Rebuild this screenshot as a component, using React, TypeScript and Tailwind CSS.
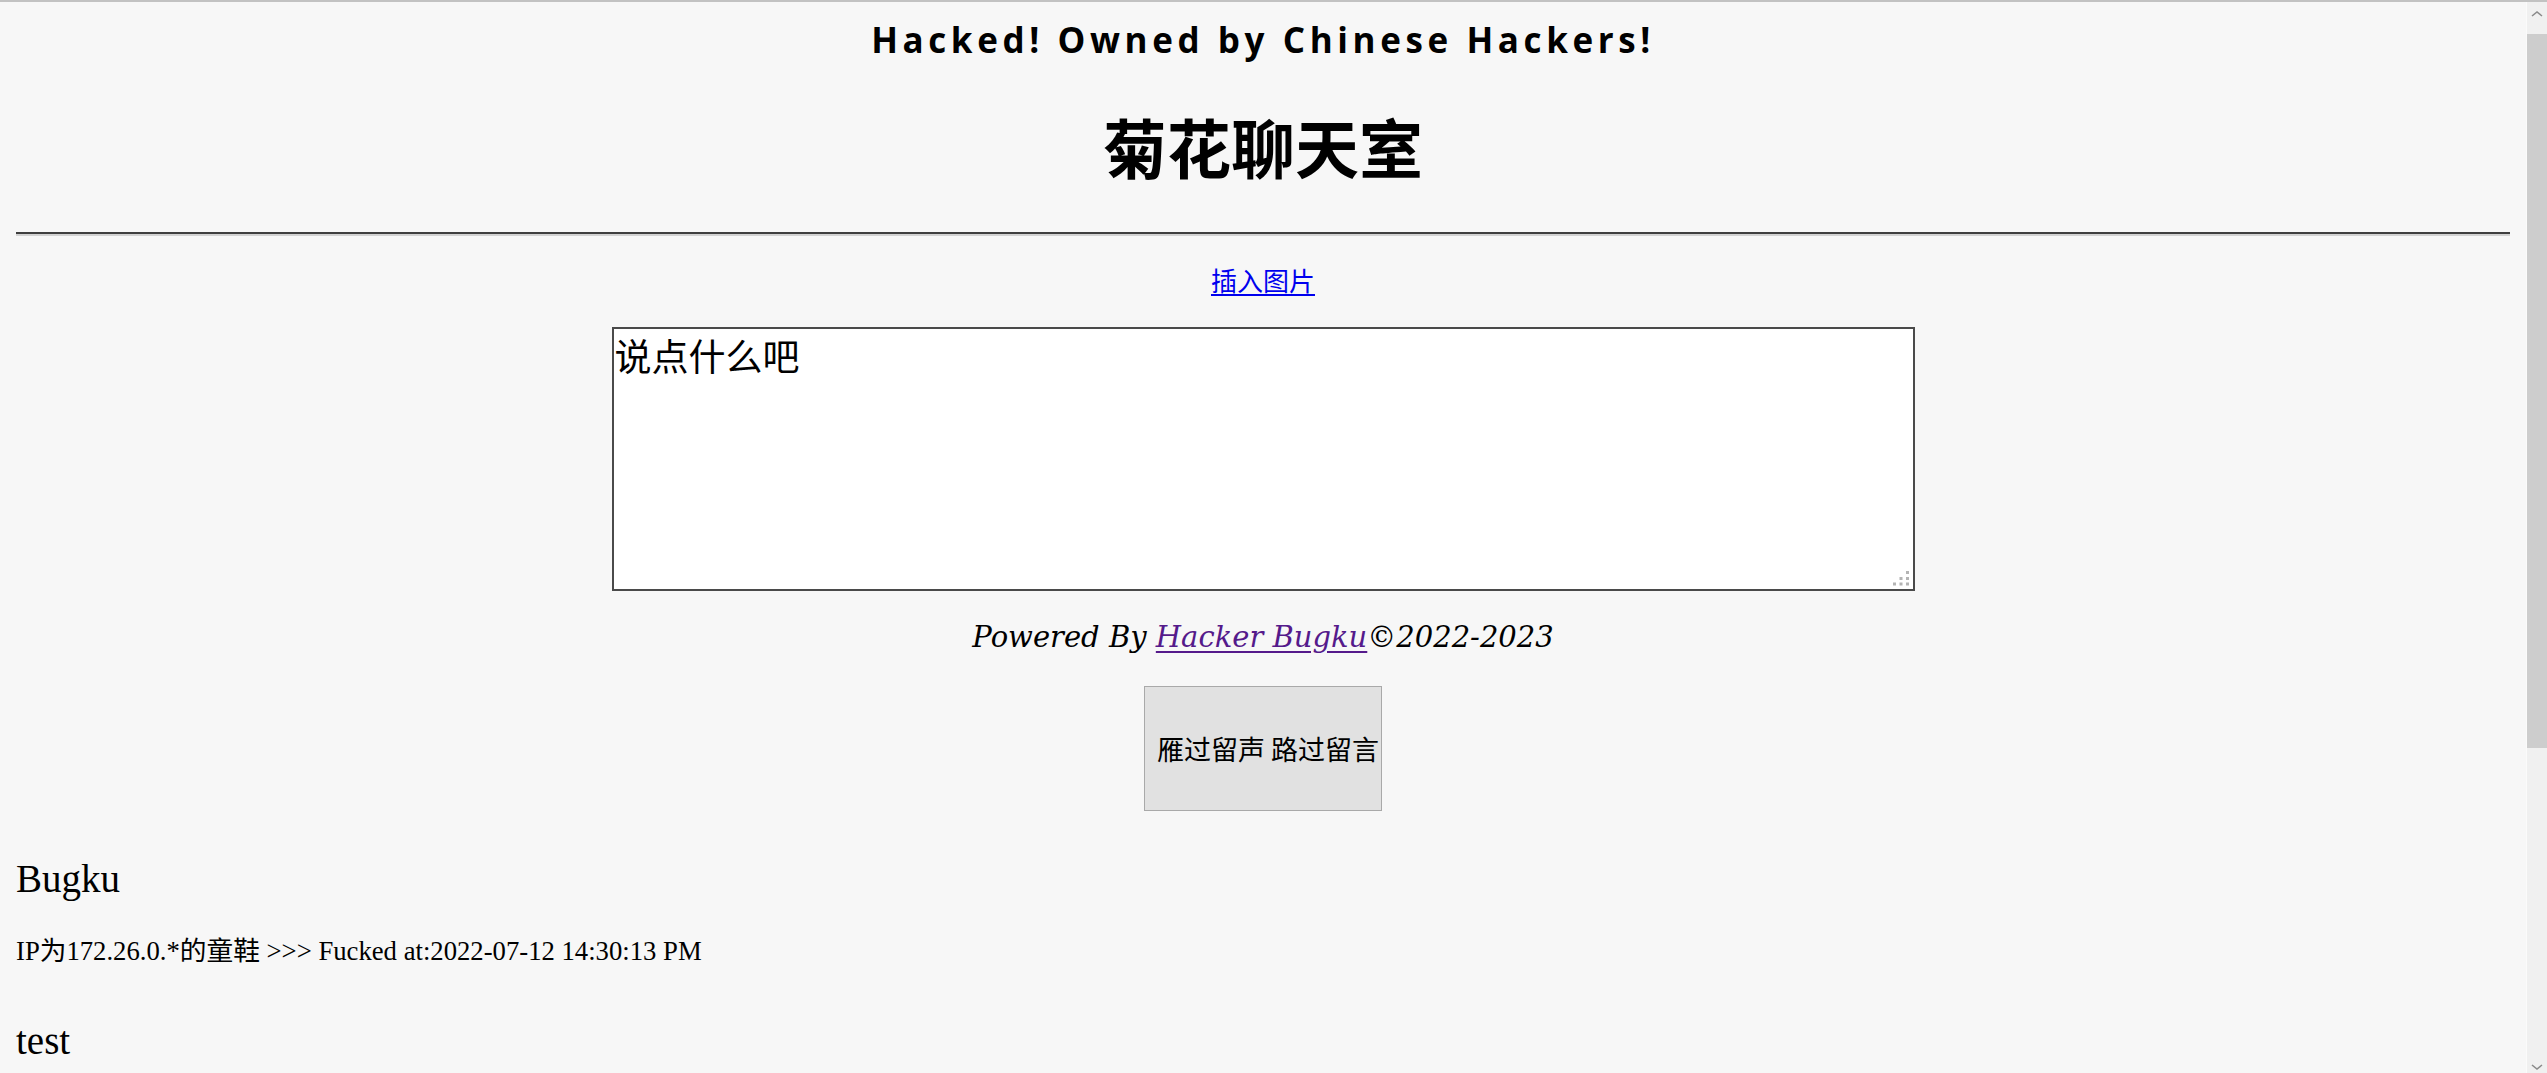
import React from "react";

function ResizeGrip() {
  // the little dotted corner drawn by the browser on the textarea
  return (
    <svg
      className="absolute right-[6px] bottom-[5px]"
      width="16"
      height="15"
      viewBox="0 0 16 15"
    >
      <rect x="13" y="0" width="3" height="3" fill="#b4b4b4" />
      <rect x="6.5" y="6" width="3" height="3" fill="#b4b4b4" />
      <rect x="13" y="6" width="3" height="3" fill="#b4b4b4" />
      <rect x="0" y="11.5" width="3" height="3" fill="#b4b4b4" />
      <rect x="6.5" y="11.5" width="3" height="3" fill="#b4b4b4" />
      <rect x="13" y="11.5" width="3" height="3" fill="#b4b4b4" />
    </svg>
  );
}

function Scrollbar() {
  return (
    <div className="w-[21px] flex flex-col bg-[#f0f0f0] border-l border-l-[#fbfbfb]">
      <div className="h-[32px] flex items-start justify-center pt-[8px]">
        <svg width="12" height="8" viewBox="0 0 12 8">
          <path d="M1 6 L6 2 L11 6" stroke="#8a8a8a" strokeWidth="1.6" fill="none" />
        </svg>
      </div>
      <div className="h-[714px] bg-[#cdcdcd]" />
      <div className="flex-1" />
      <div className="h-[22px] flex items-end justify-center pb-[2px]">
        <svg width="12" height="8" viewBox="0 0 12 8">
          <path d="M1 2 L6 6 L11 2" stroke="#8a8a8a" strokeWidth="1.6" fill="none" />
        </svg>
      </div>
    </div>
  );
}

export default function App() {
  const cjk = "font-['Noto_Sans_CJK_SC',sans-serif]";
  return (
    <div className="h-[1073px] w-full flex flex-col bg-[#f7f7f7] overflow-hidden">
      <div className="h-[2px] bg-[#c2c2c2]" />
      <div className="flex flex-1 min-h-0">
        <main className="flex-1 min-w-0 overflow-hidden px-[16px] text-black">
          <h3 className="mt-[20px] text-center text-[35px] leading-none font-bold tracking-[4.6px] font-['Open_Sans',sans-serif] whitespace-nowrap">
            Hacked! Owned by Chinese Hackers!
          </h3>

          <h1 className={`mt-[56px] text-center text-[64px] leading-[64px] font-bold ${cjk}`}>
            菊花聊天室
          </h1>

          <hr className="mt-[55px] border-0 border-t-2 border-t-[#3f3f3f] border-b-2 border-b-[#d2d2d2]" />

          <div className={`mt-[31px] text-center text-[26px] leading-[26px] ${cjk}`}>
            <a href="#" className="text-[#0000ee] underline underline-offset-[3px]">
              插入图片
            </a>
          </div>

          <div className="mt-[34px] flex justify-center">
            <div className="relative w-[1303px] h-[264px]">
              <textarea
                defaultValue="说点什么吧"
                className={`w-full h-full resize-none bg-white border-2 border-[#4a4a4a] px-[1px] pt-[5px] text-[37px] leading-[42px] text-black outline-none ${cjk}`}
              />
              <ResizeGrip />
            </div>
          </div>

          <p className="mt-[32px] text-center text-[29px] leading-none italic font-['DejaVu_Serif',serif]">
            Powered By{" "}
            <a href="#" className="text-[#551a8b] underline underline-offset-[4px]">
              Hacker Bugku
            </a>
            ©2022-2023
          </p>

          <div className="mt-[34px] flex justify-center">
            <button
              className={`w-[238px] h-[125px] bg-[#e1e1e1] border border-[#a9a9a9] text-[27px] leading-none text-black whitespace-nowrap pl-[12px] text-left ${cjk}`}
            >
              雁过留声 路过留言
            </button>
          </div>

          <div className="mt-[48px] text-[39px] leading-none font-['Liberation_Serif','Noto_Sans_CJK_SC',serif]">
            Bugku
          </div>
          <div className="mt-[40px] text-[26.7px] leading-none font-['Liberation_Serif','Noto_Sans_CJK_SC',serif] whitespace-nowrap">
            IP为172.26.0.*的童鞋 &gt;&gt;&gt; Fucked at:2022-07-12 14:30:13 PM
          </div>
          <div className="mt-[56px] text-[39px] leading-none font-['Liberation_Serif','Noto_Sans_CJK_SC',serif]">
            test
          </div>
        </main>
        <Scrollbar />
      </div>
    </div>
  );
}
